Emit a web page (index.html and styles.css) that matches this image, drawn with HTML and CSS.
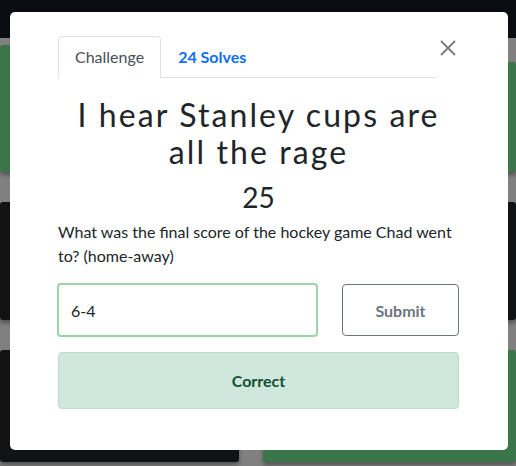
FILE: index.html
```html
<!DOCTYPE html>
<html lang="en">
<head>
<meta charset="utf-8">
<title>Challenge</title>
<link rel="stylesheet" href="styles.css">
</head>
<body>
<div class="navbar"></div>
<div class="board">
  <div class="card card-green card-r1"><span>Hat Trick</span></div>
  <div class="card card-green card-r1 card-late"><span>Slapshot</span></div>
  <div class="card card-dark"><span>Question One</span></div>
  <div class="card card-dark"><span>Hmmmm</span></div>
  <div class="card card-dark"><span>Answer Her</span></div>
  <div class="card card-green"><span>Extra</span></div>
</div>

<div class="modal">
  <div class="modal-head">
    <div class="tabs">
      <div class="tab tab-active">Challenge</div>
      <div class="tab tab-link">24 Solves</div>
    </div>
    <button class="close" aria-label="Close">
      <svg width="16" height="16" viewBox="0 0 16 16"><path d="M1 1 L15 15 M15 1 L1 15" stroke="#7b7b7b" stroke-width="1.8" fill="none"/></svg>
    </button>
  </div>
  <h2 class="title">I hear Stanley cups are all the rage</h2>
  <div class="score">25</div>
  <p class="desc">What was the final score of the hockey game Chad went to? (home-away)</p>
  <div class="form-row">
    <div class="input">6-4</div>
    <button class="submit">Submit</button>
  </div>
  <div class="alert">Correct</div>
</div>
</body>
</html>
```
FILE: styles.css
```css
html, body {
  margin: 0;
  padding: 0;
}
body {
  width: 516px;
  height: 466px;
  overflow: hidden;
  background: #808080;
  font-family: Lato, "Noto Sans", sans-serif;
}
.navbar {
  height: 38px;
  background: #090d12;
}
.board {
  display: grid;
  grid-template-columns: 239px 253px;
  grid-template-rows: 127px 118px 112px;
  column-gap: 24px;
  row-gap: 30px;
  margin-top: 7px;
}
.card {
  display: flex;
  align-items: center;
  justify-content: center;
  border-radius: 3px;
  box-shadow: 0 3px 4px rgba(0,0,0,0.35);
  font-size: 16px;
  color: #8a8a8a;
}
.card-late {
  margin-top: 17px;
}
.card-green {
  background: #3b764a;
  color: #9aa89d;
}
.card-dark {
  background: #111214;
}

.modal {
  position: fixed;
  left: 10px;
  top: 12px;
  width: 498px;
  height: 438px;
  box-sizing: border-box;
  padding: 24px 49px 0 48px;
  background: #fff;
  border-radius: 5px;
  color: #212529;
}
.modal-head {
  display: flex;
  align-items: flex-start;
}
.tabs {
  width: 378px;
  display: flex;
  border-bottom: 1px solid #dee2e6;
}
.tab {
  padding: 8px 16px;
  font-size: 16px;
  line-height: 24px;
  border: 1px solid transparent;
  border-bottom: 0;
  border-top-left-radius: 4px;
  border-top-right-radius: 4px;
  margin-bottom: -1px;
}
.tab-active {
  color: #495057;
  background: #fff;
  border-color: #dee2e6;
  padding-bottom: 9px;
}
.tab-link {
  color: #0d6efd;
  font-weight: 700;
}
.close {
  margin: 4px 0 0 4px;
  padding: 0;
  width: 16px;
  height: 16px;
  border: 0;
  background: none;
  display: flex;
}
.title {
  margin: 18px 0 0;
  padding: 0 6px;
  font-size: 32px;
  line-height: 37px;
  font-weight: 400;
  letter-spacing: 2.1px;
  text-align: center;
}
.score {
  margin-top: 10px;
  font-size: 28px;
  line-height: 34px;
  text-align: center;
}
.desc {
  margin: 6px 0 0;
  font-size: 16px;
  line-height: 24px;
}
.form-row {
  margin-top: 15px;
  display: flex;
  align-items: flex-start;
  gap: 24px;
}
.input {
  width: 261px;
  height: 54px;
  box-sizing: border-box;
  border: 2px solid #9bd5a8;
  border-radius: 4px;
  padding: 0 12px;
  display: flex;
  align-items: center;
  font-size: 16px;
  color: #212529;
  margin-left: -1px;
}
.submit {
  width: 117px;
  height: 52px;
  margin-top: 1px;
  box-sizing: border-box;
  border: 1px solid #6c757d;
  border-radius: 4px;
  background: #fff;
  color: #6c757d;
  font-family: Lato, "Noto Sans", sans-serif;
  font-size: 16px;
  font-weight: 700;
}
.alert {
  margin-top: 15px;
  height: 57px;
  box-sizing: border-box;
  background: #cfe7dc;
  border: 1px solid #b8ddcb;
  border-radius: 4px;
  display: flex;
  align-items: center;
  justify-content: center;
  color: #0f5132;
  font-size: 16px;
  font-weight: 700;
}
```
